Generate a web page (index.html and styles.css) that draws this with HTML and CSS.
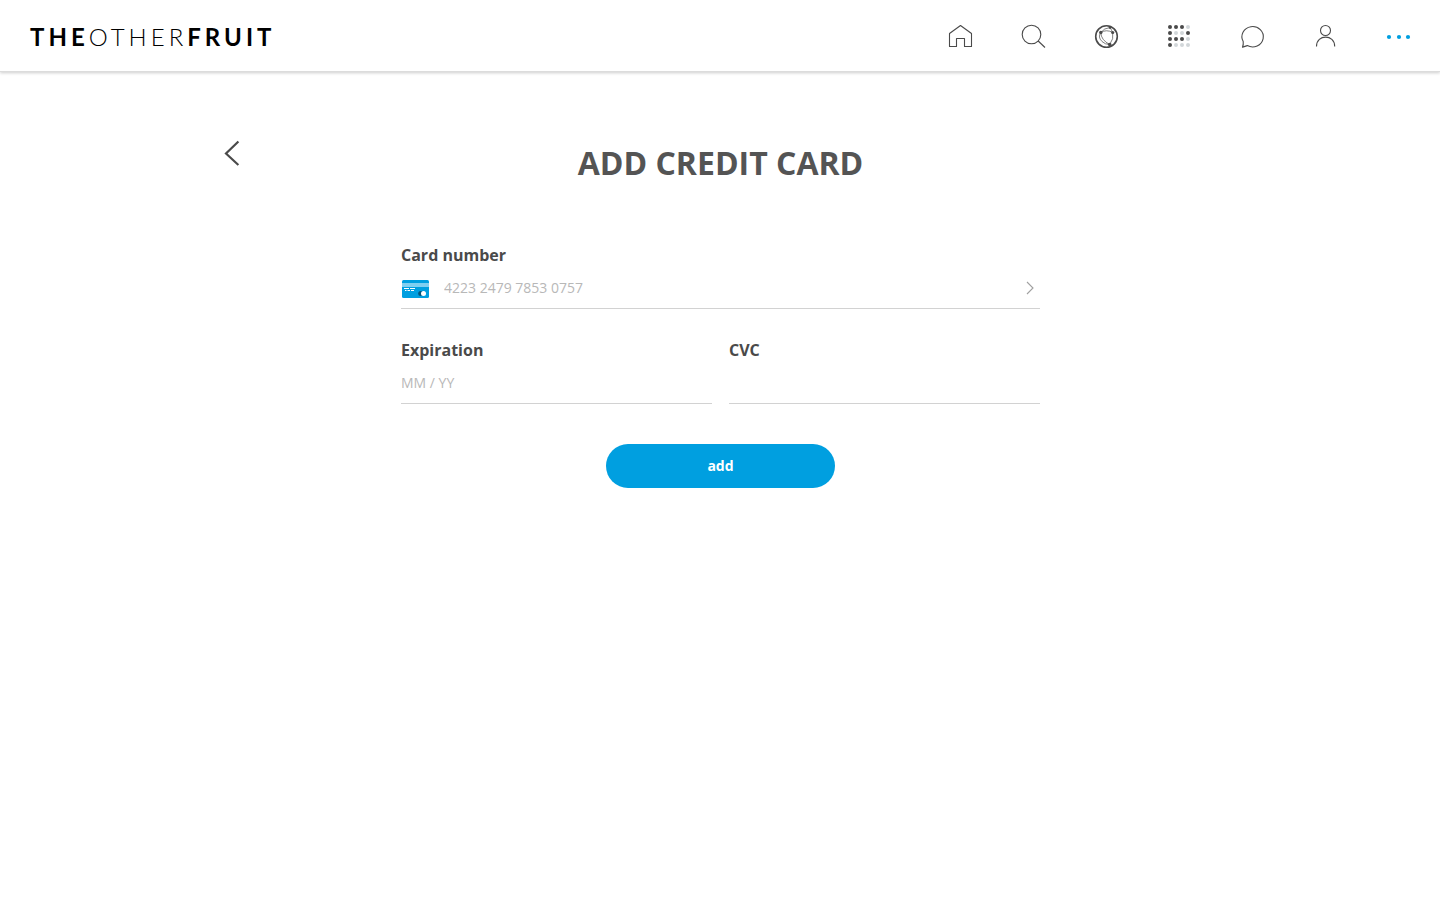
FILE: index.html
```html
<!DOCTYPE html>
<html lang="en">
<head>
<meta charset="utf-8">
<meta name="viewport" content="width=device-width, initial-scale=1">
<title>Add credit card</title>
<link rel="stylesheet" href="styles.css">
</head>
<body>
<header class="topbar">
  <a class="logo" href="#"><b>THE</b>OTHER<b>FRUIT</b></a>
  <nav class="nav" aria-label="Main">
    <a href="#" aria-label="Home"><svg viewBox="1 0 24 24"><path d="M1.5 22.5V9.5L12.5 1.5L23.5 9.5V22.5H16.5V14.5H8.5V22.5Z"/></svg></a>
    <a href="#" aria-label="Search"><svg viewBox="1 0 24 24"><circle cx="10.5" cy="10.5" r="9.3"/><path d="M17.2 17L24 23.5"/></svg></a>
    <a href="#" aria-label="Network"><svg viewBox="1 0 24 24"><circle class="ring" cx="12.5" cy="12.5" r="10.8"/><g class="thin"><path d="M6.8 8.5Q12.5 5 18.7 8.5M6.8 8.5Q7 16 15.7 20.5M18.7 8.5Q20 15 15.7 20.5M6.8 8.5Q10 4 16.2 3.5M16.2 3.5L18.7 8.5M6.8 8.5Q3.5 13 8 17.5Q11 20.5 15.7 20.5"/></g><g class="dot"><circle cx="6.8" cy="8.5" r="1.7"/><circle cx="16" cy="3.6" r="1.3"/><circle cx="18.7" cy="8.5" r="1.6"/><circle cx="15.7" cy="20.5" r="1.8"/></g></svg></a>
    <a href="#" aria-label="Apps"><svg viewBox="1 0 24 24"><g class="dot"><circle cx="3" cy="3" r="2"/><circle cx="9" cy="3" r="2"/><circle cx="15" cy="3" r="2"/><circle cx="3" cy="9" r="2"/><circle cx="21" cy="9" r="2"/><circle cx="3" cy="15" r="2"/><circle cx="9" cy="15" r="2"/><circle cx="15" cy="15" r="2"/><circle cx="3" cy="21" r="2"/></g><g class="pale"><circle cx="21" cy="3" r="2"/><circle cx="9" cy="9" r="2"/><circle cx="15" cy="9" r="2"/><circle cx="21" cy="15" r="2"/><circle cx="9" cy="21" r="2"/><circle cx="15" cy="21" r="2"/><circle cx="21" cy="21" r="2"/></g></svg></a>
    <a href="#" aria-label="Messages"><svg viewBox="1 0 24 24"><path d="M2.5 23.3Q3.6 20.5 3.2 17.6A10.7 10.2 0 1 1 7.3 21.6Q5 22.3 2.5 23.3Z"/></svg></a>
    <a href="#" aria-label="Profile"><svg viewBox="0 0 24 24"><circle cx="11.5" cy="6.5" r="5"/><path d="M2.5 22.5C2.5 10 20.7 10 20.7 22.5"/></svg></a>
    <a href="#" aria-label="More"><svg viewBox="0 0 24 24"><g class="blue"><circle cx="2" cy="13" r="2.1"/><circle cx="12" cy="13" r="2.1"/><circle cx="21" cy="13" r="2.1"/></g></svg></a>
  </nav>
</header>
<main class="page">
  <div class="heading">
    <button class="back" type="button" aria-label="Back"><svg viewBox="1 0 16 28"><path d="M14.4 2.5L2 14.5L14.4 26"/></svg></button>
    <h1>ADD CREDIT CARD</h1>
  </div>
  <form class="form">
    <div class="field wide">
      <label for="number">Card number</label>
      <div class="line">
        <svg class="card" viewBox="0 0 27 18"><rect width="27" height="18" rx="1.5" fill="#009fe0"/><path d="M0 3H27V7H0Z" fill="#80cff0"/><path d="M2 8.5H7M8 8.5H13M3 10.5H4.5M5.5 10.5H8M9 10.5H12" stroke="#fff"/><circle cx="18.7" cy="13.5" r="2.5" fill="#00567d"/><circle cx="21.5" cy="13.5" r="2.5" fill="#fff"/></svg>
        <input id="number" type="text" inputmode="numeric" placeholder="4223 2479 7853 0757">
        <svg class="next" viewBox="0 0 8 14"><path d="M1 1L7 7L1 13"/></svg>
      </div>
    </div>
    <div class="field">
      <label for="expiration">Expiration</label>
      <div class="line"><input id="expiration" type="text" placeholder="MM / YY"></div>
    </div>
    <div class="field">
      <label for="cvc">CVC</label>
      <div class="line"><input id="cvc" type="text"></div>
    </div>
    <button class="add" type="submit">add</button>
  </form>
</main>
</body>
</html>
```
FILE: styles.css
```css
* { box-sizing: border-box; }
body {
  margin: 0;
  background: #fff;
  color: #4a4a4a;
  font-family: "Open Sans", "Noto Sans", sans-serif;
}
.topbar {
  display: flex;
  align-items: center;
  justify-content: space-between;
  height: 72px;
  padding: 0 29px 0 30px;
  border-bottom: 1px solid #dcdcdc;
  box-shadow: 0 1px 3px rgba(0, 0, 0, 0.2);
}
.logo {
  padding-top: 2px;
  color: #000;
  font-family: Lato, sans-serif;
  font-size: 24px;
  font-weight: 300;
  line-height: 32px;
  letter-spacing: 4px;
  text-decoration: none;
}
.logo b { font-weight: 700; }
.nav { display: flex; gap: 49px; }
.nav a { display: block; height: 24px; }
.nav svg {
  display: block;
  width: 24px;
  height: 24px;
  overflow: visible;
  fill: none;
  stroke: #4a4a4a;
  stroke-width: 1.1;
  stroke-linejoin: round;
}
.nav .ring { stroke-width: 1.6; }
.nav .thin { stroke-width: 0.7; }
.nav .dot { fill: #4a4a4a; stroke: none; }
.nav .pale { fill: #d2d7da; stroke: none; }
.nav .blue { fill: #009fe0; stroke: none; }
.page {
  width: 100%;
  max-width: 1040px;
  margin: 0 auto;
  padding: 67px 24px 40px 25px;
}
.heading {
  display: grid;
  grid-template-columns: 16px 1fr 16px;
  align-items: start;
}
.back {
  padding: 0;
  border: 0;
  background: none;
  cursor: pointer;
}
.back svg {
  display: block;
  width: 16px;
  height: 28px;
  overflow: visible;
  fill: none;
  stroke: #4a4a4a;
  stroke-width: 2.2;
}
h1 {
  margin: 2px 0 0;
  color: #545454;
  font-size: 32px;
  font-weight: 700;
  line-height: 44px;
  text-align: center;
}
.form {
  display: grid;
  grid-template-columns: 1fr 1fr;
  gap: 30px 17px;
  max-width: 639px;
  margin: 59px auto 0;
}
.wide { grid-column: 1 / -1; }
.field label {
  display: block;
  font-size: 16px;
  font-weight: 700;
  line-height: 22px;
}
.line {
  display: flex;
  align-items: center;
  height: 43px;
  padding-top: 2px;
  border-bottom: 1px solid #d2d2d2;
}
.line input {
  flex: 1;
  min-width: 0;
  padding: 0;
  border: 0;
  outline: 0;
  background: none;
  color: #4a4a4a;
  font: 14px/20px "Open Sans", "Noto Sans", sans-serif;
}
.line input::placeholder { color: #b8b8b8; opacity: 1; }
.card { width: 27px; height: 18px; margin: 2px 15px 0 1px; }
.next {
  width: 8px;
  height: 14px;
  margin-right: 6px;
  fill: none;
  stroke: #a0a0a0;
  stroke-width: 1.1;
}
.add {
  grid-column: 1 / -1;
  justify-self: center;
  width: 229px;
  height: 44px;
  margin-top: 10px;
  border: 0;
  border-radius: 22px;
  background: #009fe0;
  color: #fff;
  font: 700 14px/20px "Open Sans", "Noto Sans", sans-serif;
  cursor: pointer;
}
```
